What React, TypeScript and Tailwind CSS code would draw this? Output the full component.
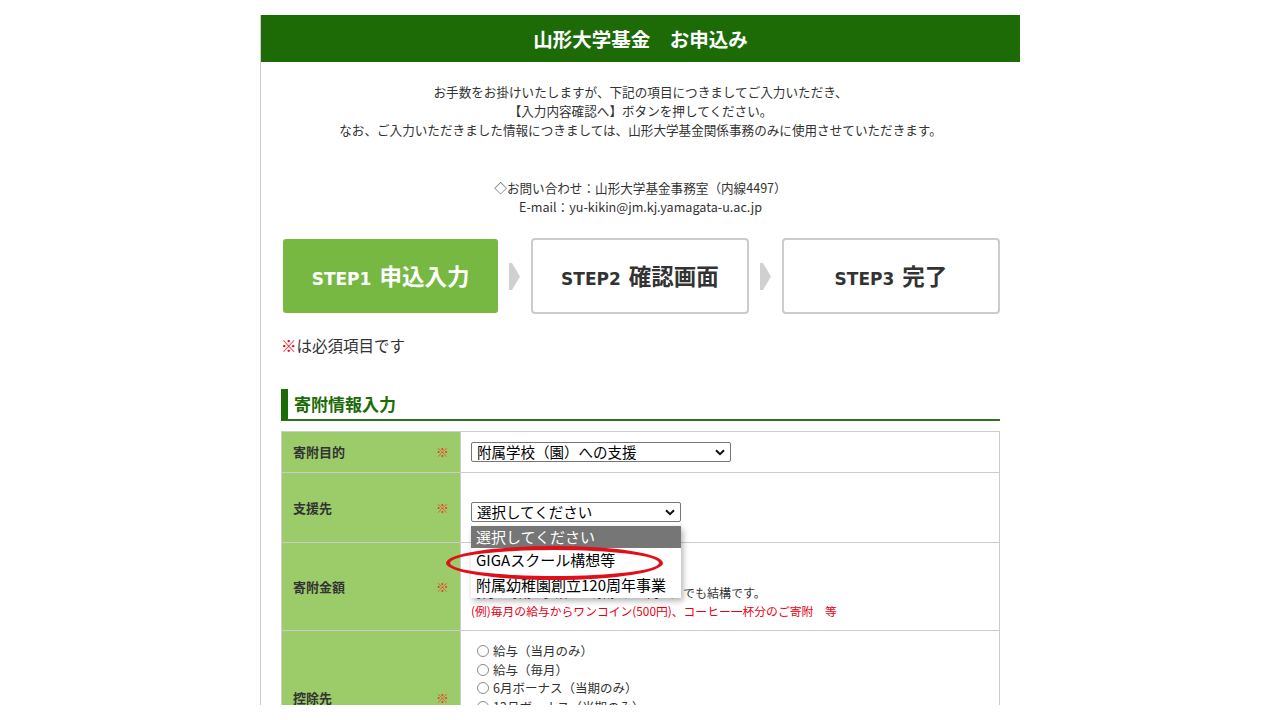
import type { JSX, ReactNode } from 'react';

const jp = { fontFamily: '"Noto Sans CJK JP", "Noto Sans", sans-serif' };
const latin = { fontFamily: '"DejaVu Sans", sans-serif' };

function Chevron(): JSX.Element {
	return (
		<svg width="10" height="7" viewBox="0 0 10 7" className="shrink-0">
			<path d="M1 1.2 L5 5.2 L9 1.2" fill="none" stroke="#111" strokeWidth="2" />
		</svg>
	);
}

function StepArrow(): JSX.Element {
	return (
		<div className="w-[33px] flex justify-center">
			<svg width="11" height="27" viewBox="0 0 11 27">
				<polygon points="0,0 3,0 11,13.5 3,27 0,27" fill="#d0d0d0" />
			</svg>
		</div>
	);
}

interface RowProps {
	label: string;
	className: string;
	children: ReactNode;
}

function Row({ label, className, children }: RowProps): JSX.Element {
	return (
		<div className="flex border-b border-[#cccccc] last:border-b-0">
			<div className="w-[179px] shrink-0 bg-[#9ccb6a] flex items-center justify-between pl-[11px] pr-[11px] border-r border-[#cccccc]">
				<span className="text-[13px] font-bold text-[#333]">{label}</span>
				<span className="text-[13px] text-[#e5471d]">※</span>
			</div>
			<div className={`flex-1 pl-[10px] ${className}`}>{children}</div>
		</div>
	);
}

export default function App(): JSX.Element {
	const radios = [
		'給与（当月のみ）',
		'給与（毎月）',
		'6月ボーナス（当期のみ）',
		'12月ボーナス（当期のみ）',
		'6月・12月ボーナス（毎期）',
		'その他',
	];

	return (
		<div className="w-full h-[720px] bg-white overflow-hidden text-[#333]" style={jp}>
			<div className="mx-auto w-[760px] mt-[15px] h-[690px] overflow-hidden border-l border-[#cccccc]">
				{/* header */}
				<div className="h-[47px] bg-[#1c6b07] flex items-center justify-center text-white text-[19.5px] font-bold">
					山形大学基金　お申込み
				</div>

				<div className="px-[20px]">
					{/* intro */}
					<div className="pt-[20px] text-center text-[12.6px] leading-[19px]">
						<p>お手数をお掛けいたしますが、下記の項目につきましてご入力いただき、</p>
						<p>【入力内容確認へ】ボタンを押してください。</p>
						<p>なお、ご入力いただきました情報につきましては、山形大学基金関係事務のみに使用させていただきます。</p>
					</div>
					<div className="mt-[39px] text-center text-[12.6px] leading-[19px]">
						<p>◇お問い合わせ：山形大学基金事務室（内線4497）</p>
						<p>E-mail：yu-kikin@jm.kj.yamagata-u.ac.jp</p>
					</div>

					{/* steps */}
					<div className="mt-[22px] ml-[2px] flex items-center">
						<div className="w-[216px] h-[74px] rounded-[3px] bg-[#77b843] text-white flex items-center justify-center font-bold">
							<p className="flex items-baseline gap-[8px]">
								<span className="text-[17px]" style={latin}>STEP1</span>
								<span className="text-[22.5px]">申込入力</span>
							</p>
						</div>
						<StepArrow />
						<div className="w-[219px] h-[76px] rounded-[4px] border-2 border-[#cccccc] bg-white flex items-center justify-center font-bold text-[#333]">
							<p className="flex items-baseline gap-[8px]">
								<span className="text-[17px]" style={latin}>STEP2</span>
								<span className="text-[22.5px]">確認画面</span>
							</p>
						</div>
						<StepArrow />
						<div className="w-[219px] h-[76px] rounded-[4px] border-2 border-[#cccccc] bg-white flex items-center justify-center font-bold text-[#333]">
							<p className="flex items-baseline gap-[8px]">
								<span className="text-[17px]" style={latin}>STEP3</span>
								<span className="text-[22.5px]">完了</span>
							</p>
						</div>
					</div>

					<p className="mt-[21px] text-[15.5px] leading-[20px]">
						<span className="text-[#e60012]">※</span>は必須項目です
					</p>

					{/* section heading */}
					<div className="mt-[34px] h-[32px] border-l-[7px] border-b-[2px] border-[#1c6b07] border-b-[#2f6f1e] flex items-center pl-[6px]">
						<h2 className="text-[17px] font-bold text-[#1c6b07]">寄附情報入力</h2>
					</div>

					{/* table */}
					<div className="mt-[10px] border border-[#cccccc]">
						<Row label="寄附目的" className="h-[40px] flex items-center">
							<div className="w-[260px] h-[20px] border border-[#767676] rounded-[2px] flex items-center justify-between pl-[5px] pr-[5px] text-[14.5px] text-black">
								<span>附属学校（園）への支援</span>
								<Chevron />
							</div>
						</Row>

						<Row label="支援先" className="h-[69px] pt-[29px]">
							<div className="relative w-[210px]">
								<div className="w-[210px] h-[20px] border border-[#767676] rounded-[2px] flex items-center justify-between pl-[5px] pr-[5px] text-[14.5px] text-black">
									<span>選択してください</span>
									<Chevron />
								</div>
								{/* open option list */}
								<div className="absolute left-0 top-[24px] z-10 w-[210px] bg-white shadow-[2px_3px_6px_rgba(0,0,0,0.3)] text-[15px] text-black">
									<div className="h-[22px] bg-[#767676] text-white pl-[5px] flex items-center">選択してください</div>
									<div className="h-[25px] pl-[5px] flex items-center">GIGAスクール構想等</div>
									<div className="h-[25px] pl-[5px] flex items-center">附属幼稚園創立120周年事業</div>
								</div>
								<div className="absolute left-[-25px] top-[44px] z-20 w-[217px] h-[34px] rounded-[50%] border-[4px] border-[#e0101a]" />
							</div>
						</Row>

						<Row label="寄附金額" className="h-[87px] pt-[13px] text-[12px] leading-[18px]">
							<div className="flex items-center gap-[4px] h-[22px]">
								<div className="w-[100px] h-[20px] border border-[#767676] rounded-[2px]" />
								<span>円</span>
							</div>
							<p className="mt-[6px]">毎月・毎期の少額のご寄附（500円〜）でも結構です。</p>
							<p className="text-[11.8px] text-[#e60012]">(例)毎月の給与からワンコイン(500円)、コーヒー一杯分のご寄附　等</p>
						</Row>

						<Row label="控除先" className="h-[134px] pt-[11px] text-[12.5px] leading-[18.5px]">
							{radios.map((r) => (
								<div key={r} className="flex items-center">
									<span className="ml-[6px] mr-[4px] w-[12px] h-[12px] rounded-full border border-[#8a8a8a] bg-white" />
									<span>{r}</span>
								</div>
							))}
						</Row>
					</div>
				</div>
			</div>
		</div>
	);
}
